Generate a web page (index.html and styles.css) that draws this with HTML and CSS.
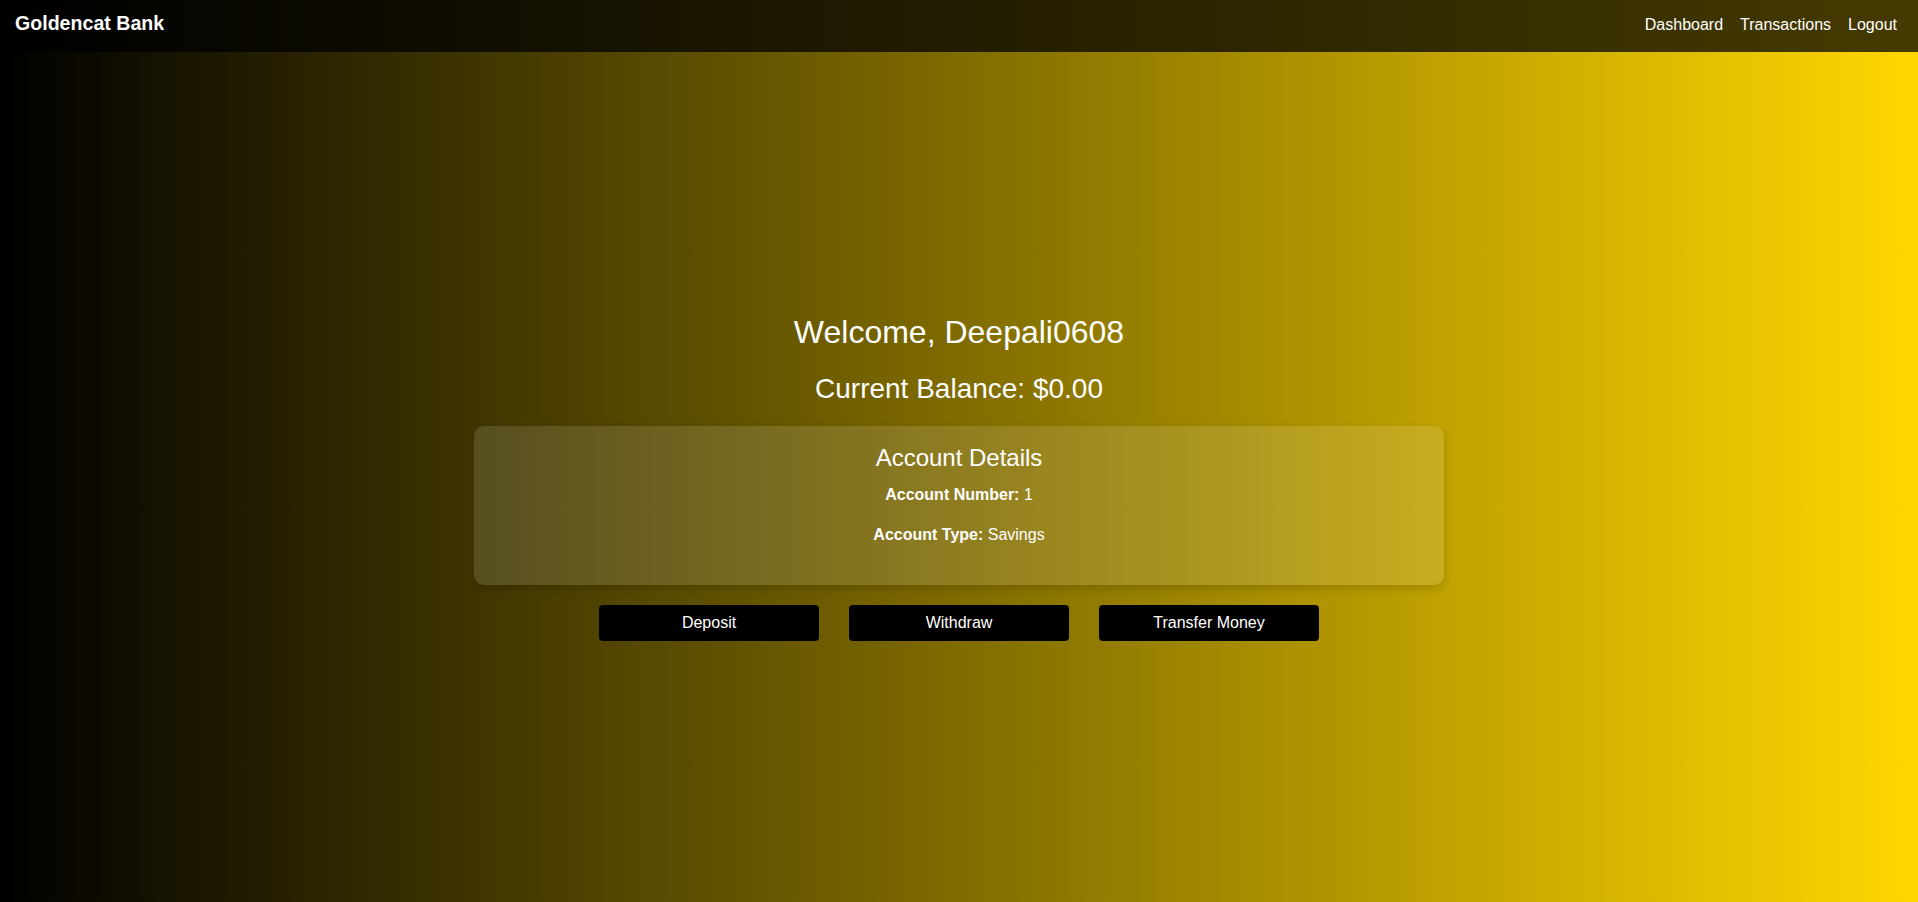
FILE: index.html
```html
<!DOCTYPE html>
<html lang="en">
<head>
<meta charset="utf-8">
<title>Goldencat Bank - Dashboard</title>
<link rel="stylesheet" href="styles.css">
</head>
<body>
<div class="page">
  <nav class="navbar">
    <div class="brand">Goldencat Bank</div>
    <div class="nav-links">
      <a href="#" class="nav-link">Dashboard</a>
      <a href="#" class="nav-link">Transactions</a>
      <a href="#" class="nav-link">Logout</a>
    </div>
  </nav>
  <main class="main">
    <h1 class="welcome">Welcome, Deepali0608</h1>
    <h2 class="balance">Current Balance: $0.00</h2>
    <section class="card">
      <h3 class="card-title">Account Details</h3>
      <p class="detail"><strong>Account Number:</strong> 1</p>
      <p class="detail"><strong>Account Type:</strong> Savings</p>
    </section>
    <div class="actions">
      <button class="btn">Deposit</button>
      <button class="btn">Withdraw</button>
      <button class="btn">Transfer Money</button>
    </div>
  </main>
</div>
</body>
</html>
```

FILE: styles.css
```css
* {
  box-sizing: border-box;
}

html, body {
  margin: 0;
  padding: 0;
  height: 100%;
}

body {
  font-family: "Liberation Sans", Arial, sans-serif;
  color: #ffffff;
  background: linear-gradient(to right, #000000, #ffd700);
  min-height: 100vh;
}

.page {
  display: flex;
  flex-direction: column;
  min-height: 100vh;
}

.navbar {
  height: 52px;
  display: flex;
  justify-content: space-between;
  align-items: baseline;
  padding: 12px 21px 0 15px;
  background: rgba(0, 0, 0, 0.73);
}

.brand {
  font-size: 19.6px;
  font-weight: bold;
  line-height: 23px;
}

.nav-links {
  display: flex;
  gap: 17px;
}

.nav-link {
  color: #ffffff;
  text-decoration: none;
  font-size: 16px;
  line-height: 18px;
}

.main {
  flex: 1;
  display: flex;
  flex-direction: column;
  align-items: center;
  justify-content: center;
  text-align: center;
}

.welcome {
  margin: 0 0 22px;
  font-size: 32px;
  font-weight: normal;
  line-height: 37px;
}

.balance {
  margin: 0 0 21px;
  font-size: 28px;
  font-weight: normal;
  line-height: 32px;
}

.card {
  width: 970px;
  padding: 18px 20px 19px;
  background: rgba(255, 255, 255, 0.125);
  border-radius: 10px;
  box-shadow: 0 4px 10px rgba(0, 0, 0, 0.15);
}

.card-title {
  margin: 0 0 14px;
  font-size: 24px;
  font-weight: normal;
  line-height: 28px;
}

.detail {
  margin: 0 0 22px;
  font-size: 16px;
  line-height: 18px;
}

.actions {
  display: flex;
  gap: 30px;
  margin-top: 20px;
}

.btn {
  width: 220px;
  height: 36px;
  border: none;
  border-radius: 4px;
  background: #000000;
  color: #ffffff;
  font-family: "Liberation Sans", Arial, sans-serif;
  font-size: 16px;
  cursor: pointer;
}
```
